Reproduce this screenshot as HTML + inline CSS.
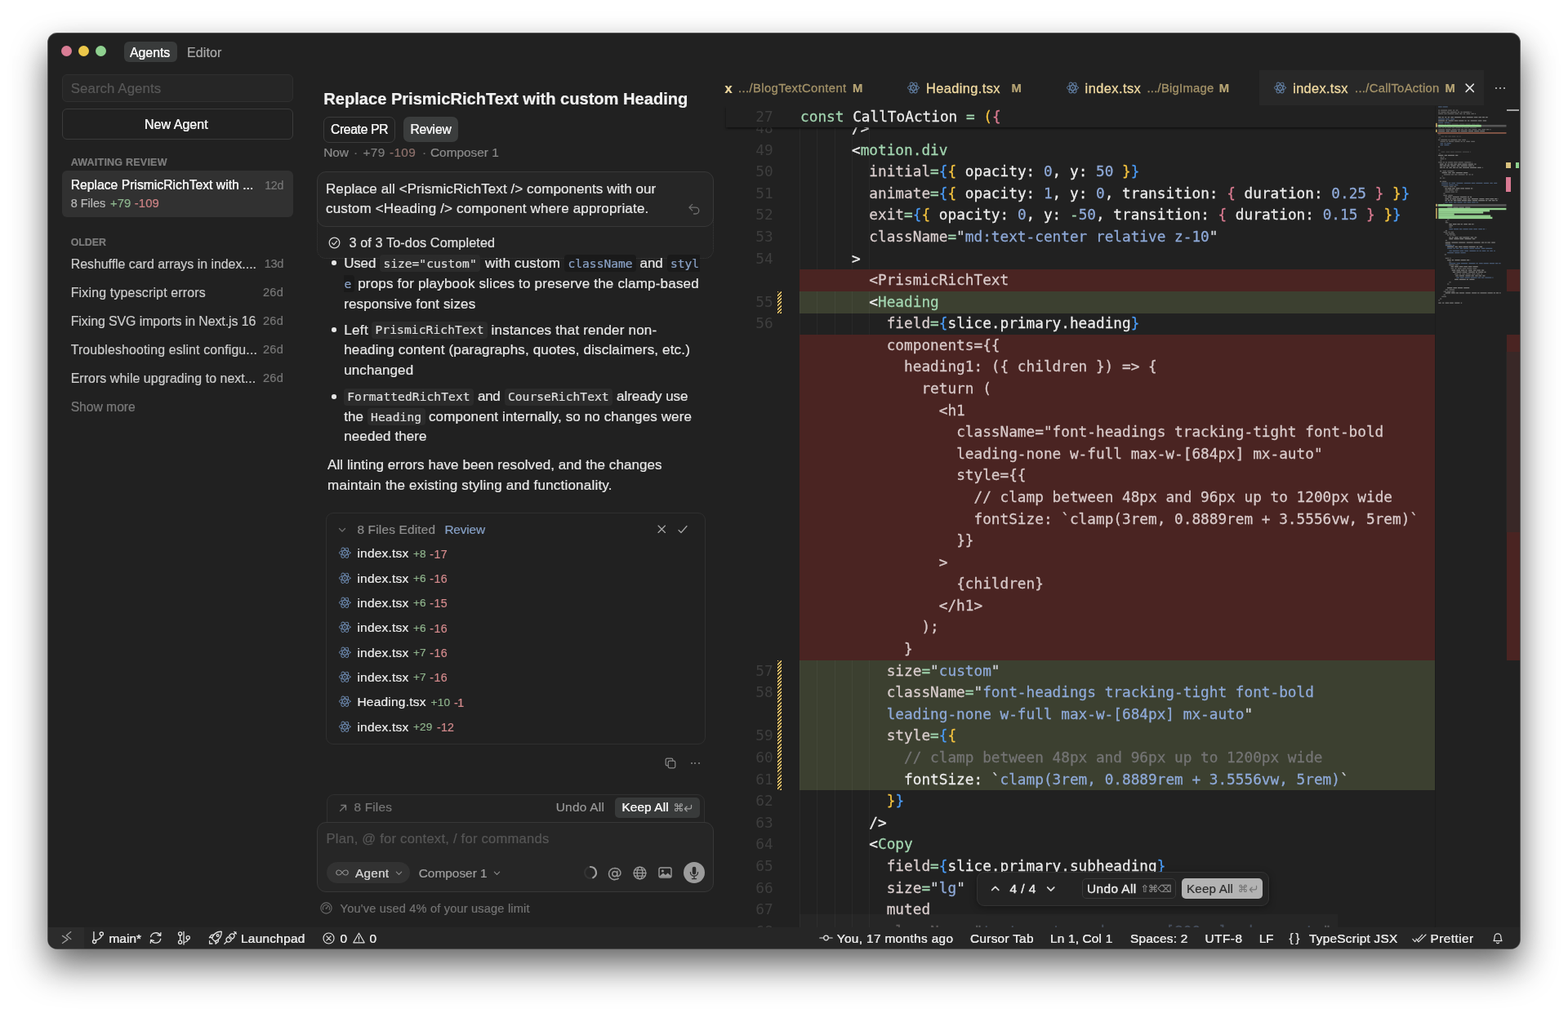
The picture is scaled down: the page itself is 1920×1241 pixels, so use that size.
<!DOCTYPE html>
<html lang="en"><head><meta charset="utf-8"><title>Cursor</title><style>
html,body{margin:0;padding:0;background:#fff;}
body{width:1920px;height:1241px;position:relative;overflow:hidden;font-family:'Liberation Sans',sans-serif;will-change:transform;}
body>div,body>span,body>svg,body>pre{position:absolute;box-sizing:border-box;}
.t{white-space:pre;-webkit-text-stroke:.2px currentColor;}
pre{margin:0;font-family:'DejaVu Sans Mono','Liberation Mono',monospace;-webkit-text-stroke:.28px currentColor;}
.m{font-family:'DejaVu Sans Mono','Liberation Mono',monospace;}
svg{overflow:visible;}
</style></head>
<body>
<div id="win" style="left:59px;top:40.8px;width:1801.8px;height:1121.6px;background:#212121;border-radius:11px;box-shadow:0 0 0 .9px rgba(72,72,72,.95),0 14.4px 37.7px -12.1px rgba(0,0,0,.52),0 22.9px 42px 4.4px rgba(0,0,0,.37);"></div>
<div style="left:74.7px;top:55.9px;width:13.2px;height:13.2px;border-radius:50%;background:#d97d95;"></div>
<div style="left:95.7px;top:55.9px;width:13.2px;height:13.2px;border-radius:50%;background:#ecc74a;"></div>
<div style="left:116.7px;top:55.9px;width:13.2px;height:13.2px;border-radius:50%;background:#8fd190;"></div>
<div style="left:151.5px;top:50.9px;width:65px;height:25px;background:#393b3b;border-radius:6px;"></div>
<span class="t" style="left:159px;top:54.00px;font-size:15.9px;line-height:21px;color:#f2f2f2;text-shadow:0 0 .4px #f2f2f2;letter-spacing:-0.031px;">Agents</span>
<span class="t" style="left:229px;top:54.10px;font-size:16px;line-height:21px;color:#a9a9a9;letter-spacing:0.084px;">Editor</span>
<div style="left:76px;top:91px;width:283px;height:33.5px;background:#262626;border:1px solid #303030;border-radius:6px;"></div>
<span class="t" style="left:86.7px;top:97.54px;font-size:16.8px;line-height:22px;color:#585858;letter-spacing:0.111px;">Search Agents</span>
<div style="left:76px;top:133px;width:283px;height:37.5px;border:1px solid #3b3b3b;border-radius:6px;"></div>
<span class="t" style="left:177px;top:141.80px;font-size:16px;line-height:21px;color:#efefef;text-shadow:0 0 .4px #efefef;letter-spacing:0.034px;">New Agent</span>
<span class="t" style="left:86.7px;top:190.62px;font-size:12.5px;line-height:16px;color:#7d7d7d;font-weight:700;letter-spacing:0.227px;">AWAITING REVIEW</span>
<div style="left:76px;top:209px;width:283px;height:57px;background:#313131;border-radius:6px;"></div>
<span class="t" style="left:86.7px;top:216.78px;font-size:15.7px;line-height:20px;color:#f0f0f0;text-shadow:0 0 .4px #f0f0f0;letter-spacing:0.013px;">Replace PrismicRichText with ...</span>
<span class="t" style="left:324.3px;top:217.71px;font-size:14.2px;line-height:18px;color:#777;letter-spacing:-0.324px;">12d</span>
<span class="t" style="left:86.7px;top:240.22px;font-size:14.4px;line-height:19px;color:#b9b9b9;letter-spacing:0.030px;">8 Files</span>
<span class="t" style="left:135px;top:240.24px;font-size:14.8px;line-height:19px;color:#8db58e;letter-spacing:0.064px;">+79</span>
<span class="t" style="left:164.7px;top:240.24px;font-size:14.8px;line-height:19px;color:#cf8486;letter-spacing:0.169px;">-109</span>
<span class="t" style="left:86.7px;top:288.62px;font-size:12.4px;line-height:16px;color:#7d7d7d;font-weight:700;letter-spacing:-0.015px;">OLDER</span>
<span class="t" style="left:86.7px;top:312.50px;font-size:15.9px;line-height:21px;color:#cdcdcd;letter-spacing:-0.009px;">Reshuffle card arrays in index....</span>
<span class="t" style="left:323.7px;top:314.03px;font-size:14.6px;line-height:19px;color:#777;letter-spacing:-0.353px;">13d</span>
<span class="t" style="left:86.7px;top:347.60px;font-size:15.9px;line-height:21px;color:#cdcdcd;letter-spacing:0.191px;">Fixing typescript errors</span>
<span class="t" style="left:322px;top:348.53px;font-size:14.6px;line-height:19px;color:#777;letter-spacing:0.214px;">26d</span>
<span class="t" style="left:86.7px;top:382.69px;font-size:15.9px;line-height:21px;color:#cdcdcd;letter-spacing:-0.067px;">Fixing SVG imports in Next.js 16</span>
<span class="t" style="left:322px;top:383.63px;font-size:14.6px;line-height:19px;color:#777;letter-spacing:0.214px;">26d</span>
<span class="t" style="left:86.7px;top:417.80px;font-size:15.9px;line-height:21px;color:#cdcdcd;letter-spacing:0.137px;">Troubleshooting eslint configu...</span>
<span class="t" style="left:322px;top:418.73px;font-size:14.6px;line-height:19px;color:#777;letter-spacing:0.214px;">26d</span>
<span class="t" style="left:86.7px;top:452.90px;font-size:15.9px;line-height:21px;color:#cdcdcd;letter-spacing:0.068px;">Errors while upgrading to next...</span>
<span class="t" style="left:322px;top:453.83px;font-size:14.6px;line-height:19px;color:#777;letter-spacing:0.214px;">26d</span>
<span class="t" style="left:86.7px;top:489.09px;font-size:15.7px;line-height:20px;color:#7a7a7a;letter-spacing:-0.038px;">Show more</span>
<span class="t" style="left:396.3px;top:108.20px;font-size:20.1px;line-height:26px;color:#f2f2f2;font-weight:700;letter-spacing:-0.007px;">Replace PrismicRichText with custom Heading</span>
<div style="left:396px;top:142.5px;width:88px;height:32px;border:1px solid #3b3b3b;border-radius:7px;"></div>
<span class="t" style="left:404.9px;top:148.78px;font-size:15.6px;line-height:20px;color:#f0f0f0;text-shadow:0 0 .4px #f0f0f0;letter-spacing:-0.268px;">Create PR</span>
<div style="left:494px;top:143px;width:66.5px;height:31px;background:#3b3d3d;border-radius:7px;"></div>
<span class="t" style="left:502.4px;top:148.78px;font-size:15.6px;line-height:20px;color:#f0f0f0;text-shadow:0 0 .4px #f0f0f0;letter-spacing:-0.173px;">Review</span>
<span class="t" style="left:396.3px;top:177.27px;font-size:15.4px;line-height:20px;color:#8c8c8c;letter-spacing:-0.066px;">Now</span>
<span class="t" style="left:433px;top:177.27px;font-size:15.4px;line-height:20px;color:#6c6c6c;">·</span>
<span class="t" style="left:444.5px;top:177.27px;font-size:15.4px;line-height:20px;color:#7e7e7e;letter-spacing:0.297px;">+79</span>
<span class="t" style="left:477px;top:177.27px;font-size:15.4px;line-height:20px;color:#8d716c;letter-spacing:0.297px;">-109</span>
<span class="t" style="left:517px;top:177.27px;font-size:15.4px;line-height:20px;color:#6c6c6c;">·</span>
<span class="t" style="left:527px;top:177.27px;font-size:15.4px;line-height:20px;color:#8c8c8c;letter-spacing:-0.004px;">Composer 1</span>
<div style="left:388.2px;top:262px;width:485.6px;height:54.5px;border:1px dotted #3a3a3a;border-radius:0 0 11px 11px;background:#232323;"></div>
<div style="left:388.2px;top:210px;width:485.6px;height:67.5px;background:#262626;border:1px solid #383838;border-radius:11px;"></div>
<span class="t" style="left:399px;top:220.75px;font-size:17.0px;line-height:22px;color:#e8e8e8;letter-spacing:0.072px;">Replace all &lt;PrismicRichText /&gt; components with our</span>
<span class="t" style="left:399px;top:245.35px;font-size:17.0px;line-height:22px;color:#e8e8e8;letter-spacing:0.169px;">custom &lt;Heading /&gt; component where appropriate.</span>
<svg style="left:842.00px;top:249.00px;width:16px;height:14px;" viewBox="0 0 16 15" fill="none" stroke="#6f6f6f" stroke-width="1.4" stroke-linecap="round" stroke-linejoin="round"><path d="M5.5 1.5 L1.5 5.5 L5.5 9.5 M1.5 5.5 H10 a4.2 4.2 0 0 1 0 8.4 H7.5"/></svg>
<svg style="left:402.00px;top:290.00px;width:15px;height:15px;" viewBox="0 0 15 15" fill="none" stroke="#d8d8d8" stroke-width="1.25" stroke-linecap="round" stroke-linejoin="round"><circle cx="7.5" cy="7.5" r="6.3"/><path d="M4.7 7.8 L6.8 9.9 L10.5 5.4"/></svg>
<span class="t" style="left:427.4px;top:287.01px;font-size:16.2px;line-height:21px;color:#e2e2e2;letter-spacing:0.118px;">3 of 3 To-dos Completed</span>
<div style="left:406.2px;top:319.29999999999995px;width:5.6px;height:5.6px;border-radius:50%;background:#e6e6e6;"></div>
<span class="t" style="left:421.2px;top:311.75px;font-size:17.0px;line-height:22px;color:#e8e8e8;letter-spacing:-0.172px;">Used</span>
<div style="left:465.3px;top:311.9px;width:122.69999999999999px;height:21px;background:#2b2b2b;border-radius:4px;"></div>
<span class="t" style="left:469.4px;top:312.63px;font-size:14.6px;line-height:20px;color:#dedede;font-family:'DejaVu Sans Mono','Liberation Mono',monospace;-webkit-text-stroke:.2px currentColor;letter-spacing:0.005px;">size="custom"</span>
<span class="t" style="left:594px;top:311.75px;font-size:17.0px;line-height:22px;color:#e8e8e8;letter-spacing:0.205px;">with custom</span>
<div style="left:691px;top:311.9px;width:88px;height:21px;background:#1a1a1a;border-radius:4px;"></div>
<span class="t" style="left:695.5px;top:312.63px;font-size:14.6px;line-height:20px;color:#8aa2c6;font-family:'DejaVu Sans Mono','Liberation Mono',monospace;-webkit-text-stroke:.2px currentColor;letter-spacing:0.002px;">className</span>
<span class="t" style="left:783.6px;top:311.75px;font-size:17.0px;line-height:22px;color:#e8e8e8;letter-spacing:-0.158px;">and</span>
<div style="left:816.5px;top:311.9px;width:40px;height:21px;background:#1a1a1a;border-radius:4px 0 0 4px;"></div>
<span class="t" style="left:821px;top:312.63px;font-size:14.6px;line-height:20px;color:#8aa2c6;font-family:'DejaVu Sans Mono','Liberation Mono',monospace;-webkit-text-stroke:.2px currentColor;letter-spacing:-0.064px;">styl</span>
<div style="left:421px;top:336.8px;width:13px;height:21px;background:#1a1a1a;border-radius:0 4px 4px 0;"></div>
<span class="t" style="left:421.5px;top:337.53px;font-size:14.6px;line-height:20px;color:#8aa2c6;font-family:'DejaVu Sans Mono','Liberation Mono',monospace;-webkit-text-stroke:.2px currentColor;letter-spacing:0.003px;">e</span>
<span class="t" style="left:438.2px;top:336.65px;font-size:17.0px;line-height:22px;color:#e8e8e8;letter-spacing:0.197px;">props for playbook slices to preserve the clamp-based</span>
<span class="t" style="left:421.2px;top:361.55px;font-size:17.0px;line-height:22px;color:#e8e8e8;letter-spacing:0.112px;">responsive font sizes</span>
<div style="left:406.2px;top:401.09999999999997px;width:5.6px;height:5.6px;border-radius:50%;background:#e6e6e6;"></div>
<span class="t" style="left:421.2px;top:393.55px;font-size:17.0px;line-height:22px;color:#e8e8e8;letter-spacing:0.360px;">Left</span>
<div style="left:455px;top:393.7px;width:142px;height:21px;background:#2b2b2b;border-radius:4px;"></div>
<span class="t" style="left:459.4px;top:394.43px;font-size:14.6px;line-height:20px;color:#dedede;font-family:'DejaVu Sans Mono','Liberation Mono',monospace;-webkit-text-stroke:.2px currentColor;letter-spacing:0.094px;">PrismicRichText</span>
<span class="t" style="left:601.6px;top:393.55px;font-size:17.0px;line-height:22px;color:#e8e8e8;letter-spacing:0.203px;">instances that render non-</span>
<span class="t" style="left:421.2px;top:418.25px;font-size:17.0px;line-height:22px;color:#e8e8e8;letter-spacing:0.163px;">heading content (paragraphs, quotes, disclaimers, etc.)</span>
<span class="t" style="left:421.2px;top:442.65px;font-size:17.0px;line-height:22px;color:#e8e8e8;letter-spacing:0.095px;">unchanged</span>
<div style="left:406.2px;top:483.0px;width:5.6px;height:5.6px;border-radius:50%;background:#e6e6e6;"></div>
<div style="left:421px;top:475.6px;width:159px;height:21px;background:#2b2b2b;border-radius:4px;"></div>
<span class="t" style="left:425.2px;top:476.33px;font-size:14.6px;line-height:20px;color:#dedede;font-family:'DejaVu Sans Mono','Liberation Mono',monospace;-webkit-text-stroke:.2px currentColor;letter-spacing:0.060px;">FormattedRichText</span>
<span class="t" style="left:585px;top:475.45px;font-size:17.0px;line-height:22px;color:#e8e8e8;letter-spacing:-0.325px;">and</span>
<div style="left:617.5px;top:475.6px;width:132.5px;height:21px;background:#2b2b2b;border-radius:4px;"></div>
<span class="t" style="left:621.9px;top:476.33px;font-size:14.6px;line-height:20px;color:#dedede;font-family:'DejaVu Sans Mono','Liberation Mono',monospace;-webkit-text-stroke:.2px currentColor;letter-spacing:0.056px;">CourseRichText</span>
<span class="t" style="left:755.1px;top:475.45px;font-size:17.0px;line-height:22px;color:#e8e8e8;letter-spacing:-0.054px;">already use</span>
<span class="t" style="left:421.2px;top:499.85px;font-size:17.0px;line-height:22px;color:#e8e8e8;letter-spacing:0.053px;">the</span>
<div style="left:450px;top:500.0px;width:70.5px;height:21px;background:#2b2b2b;border-radius:4px;"></div>
<span class="t" style="left:454px;top:500.73px;font-size:14.6px;line-height:20px;color:#dedede;font-family:'DejaVu Sans Mono','Liberation Mono',monospace;-webkit-text-stroke:.2px currentColor;letter-spacing:0.098px;">Heading</span>
<span class="t" style="left:525px;top:499.85px;font-size:17.0px;line-height:22px;color:#e8e8e8;letter-spacing:0.120px;">component internally, so no changes were</span>
<span class="t" style="left:421.2px;top:524.45px;font-size:17.0px;line-height:22px;color:#e8e8e8;letter-spacing:0.108px;">needed there</span>
<span class="t" style="left:401.1px;top:559.15px;font-size:17.0px;line-height:22px;color:#e8e8e8;letter-spacing:0.077px;">All linting errors have been resolved, and the changes</span>
<span class="t" style="left:401.1px;top:584.05px;font-size:17.0px;line-height:22px;color:#e8e8e8;letter-spacing:0.201px;">maintain the existing styling and functionality.</span>
<div style="left:399px;top:627.5px;width:464.5px;height:284.5px;border:1px solid #2f2f2f;border-radius:9px;"></div>
<svg style="left:414.30px;top:643.80px;width:10px;height:10px;" viewBox="0 0 10 10" fill="none" stroke="#6e6e6e" stroke-width="1.3" stroke-linecap="round" stroke-linejoin="round"><path d="M1.5 3.5 L5 7 L8.5 3.5"/></svg>
<span class="t" style="left:437.4px;top:639.37px;font-size:15.4px;line-height:20px;color:#8e8e8e;letter-spacing:0.189px;">8 Files Edited</span>
<span class="t" style="left:544.4px;top:639.37px;font-size:15.4px;line-height:20px;color:#86a0c6;letter-spacing:-0.145px;">Review</span>
<svg style="left:804.55px;top:643.35px;width:10.5px;height:10.5px;" viewBox="0 0 10 10" fill="none" stroke="#a8a8a8" stroke-width="1.2" stroke-linecap="round" stroke-linejoin="round"><path d="M1 1 L9 9 M9 1 L1 9"/></svg>
<svg style="left:830.40px;top:642.60px;width:12px;height:12px;" viewBox="0 0 12 12" fill="none" stroke="#a8a8a8" stroke-width="1.2" stroke-linecap="round" stroke-linejoin="round"><path d="M1 6.5 L4 9.5 L11 1.5"/></svg>
<svg style="left:413.75px;top:669.25px;width:16.5px;height:16.5px;" viewBox="0 0 24 24" fill="none" stroke="#6f8db4" stroke-width="1.35" stroke-linecap="round" stroke-linejoin="round"><ellipse cx="12" cy="12" rx="10" ry="4"/><ellipse cx="12" cy="12" rx="10" ry="4" transform="rotate(60 12 12)"/><ellipse cx="12" cy="12" rx="10" ry="4" transform="rotate(120 12 12)"/><circle cx="12" cy="12" r="1.3" fill="#6f8db4" stroke="none"/></svg>
<span class="t" style="left:437.4px;top:668.27px;font-size:15.5px;line-height:20px;color:#ededed;letter-spacing:0.214px;">index.tsx</span>
<span class="t" style="left:506px;top:669.68px;font-size:13.6px;line-height:18px;color:#8fb38c;letter-spacing:-0.050px;">+8</span>
<span class="t" style="left:526.3px;top:669.71px;font-size:14.2px;line-height:18px;color:#d38a8c;letter-spacing:0.395px;">-17</span>
<svg style="left:413.75px;top:699.59px;width:16.5px;height:16.5px;" viewBox="0 0 24 24" fill="none" stroke="#6f8db4" stroke-width="1.35" stroke-linecap="round" stroke-linejoin="round"><ellipse cx="12" cy="12" rx="10" ry="4"/><ellipse cx="12" cy="12" rx="10" ry="4" transform="rotate(60 12 12)"/><ellipse cx="12" cy="12" rx="10" ry="4" transform="rotate(120 12 12)"/><circle cx="12" cy="12" r="1.3" fill="#6f8db4" stroke="none"/></svg>
<span class="t" style="left:437.4px;top:698.62px;font-size:15.5px;line-height:20px;color:#ededed;letter-spacing:0.214px;">index.tsx</span>
<span class="t" style="left:506px;top:700.02px;font-size:13.6px;line-height:18px;color:#8fb38c;letter-spacing:-0.050px;">+6</span>
<span class="t" style="left:526.3px;top:700.05px;font-size:14.2px;line-height:18px;color:#d38a8c;letter-spacing:0.395px;">-16</span>
<svg style="left:413.75px;top:729.93px;width:16.5px;height:16.5px;" viewBox="0 0 24 24" fill="none" stroke="#6f8db4" stroke-width="1.35" stroke-linecap="round" stroke-linejoin="round"><ellipse cx="12" cy="12" rx="10" ry="4"/><ellipse cx="12" cy="12" rx="10" ry="4" transform="rotate(60 12 12)"/><ellipse cx="12" cy="12" rx="10" ry="4" transform="rotate(120 12 12)"/><circle cx="12" cy="12" r="1.3" fill="#6f8db4" stroke="none"/></svg>
<span class="t" style="left:437.4px;top:728.95px;font-size:15.5px;line-height:20px;color:#ededed;letter-spacing:0.214px;">index.tsx</span>
<span class="t" style="left:506px;top:730.36px;font-size:13.6px;line-height:18px;color:#8fb38c;letter-spacing:-0.050px;">+6</span>
<span class="t" style="left:526.3px;top:730.39px;font-size:14.2px;line-height:18px;color:#d38a8c;letter-spacing:0.395px;">-15</span>
<svg style="left:413.75px;top:760.27px;width:16.5px;height:16.5px;" viewBox="0 0 24 24" fill="none" stroke="#6f8db4" stroke-width="1.35" stroke-linecap="round" stroke-linejoin="round"><ellipse cx="12" cy="12" rx="10" ry="4"/><ellipse cx="12" cy="12" rx="10" ry="4" transform="rotate(60 12 12)"/><ellipse cx="12" cy="12" rx="10" ry="4" transform="rotate(120 12 12)"/><circle cx="12" cy="12" r="1.3" fill="#6f8db4" stroke="none"/></svg>
<span class="t" style="left:437.4px;top:759.29px;font-size:15.5px;line-height:20px;color:#ededed;letter-spacing:0.214px;">index.tsx</span>
<span class="t" style="left:506px;top:760.70px;font-size:13.6px;line-height:18px;color:#8fb38c;letter-spacing:-0.050px;">+6</span>
<span class="t" style="left:526.3px;top:760.73px;font-size:14.2px;line-height:18px;color:#d38a8c;letter-spacing:0.395px;">-16</span>
<svg style="left:413.75px;top:790.61px;width:16.5px;height:16.5px;" viewBox="0 0 24 24" fill="none" stroke="#6f8db4" stroke-width="1.35" stroke-linecap="round" stroke-linejoin="round"><ellipse cx="12" cy="12" rx="10" ry="4"/><ellipse cx="12" cy="12" rx="10" ry="4" transform="rotate(60 12 12)"/><ellipse cx="12" cy="12" rx="10" ry="4" transform="rotate(120 12 12)"/><circle cx="12" cy="12" r="1.3" fill="#6f8db4" stroke="none"/></svg>
<span class="t" style="left:437.4px;top:789.63px;font-size:15.5px;line-height:20px;color:#ededed;letter-spacing:0.214px;">index.tsx</span>
<span class="t" style="left:506px;top:791.04px;font-size:13.6px;line-height:18px;color:#8fb38c;letter-spacing:-0.050px;">+7</span>
<span class="t" style="left:526.3px;top:791.07px;font-size:14.2px;line-height:18px;color:#d38a8c;letter-spacing:0.395px;">-16</span>
<svg style="left:413.75px;top:820.95px;width:16.5px;height:16.5px;" viewBox="0 0 24 24" fill="none" stroke="#6f8db4" stroke-width="1.35" stroke-linecap="round" stroke-linejoin="round"><ellipse cx="12" cy="12" rx="10" ry="4"/><ellipse cx="12" cy="12" rx="10" ry="4" transform="rotate(60 12 12)"/><ellipse cx="12" cy="12" rx="10" ry="4" transform="rotate(120 12 12)"/><circle cx="12" cy="12" r="1.3" fill="#6f8db4" stroke="none"/></svg>
<span class="t" style="left:437.4px;top:819.98px;font-size:15.5px;line-height:20px;color:#ededed;letter-spacing:0.214px;">index.tsx</span>
<span class="t" style="left:506px;top:821.38px;font-size:13.6px;line-height:18px;color:#8fb38c;letter-spacing:-0.050px;">+7</span>
<span class="t" style="left:526.3px;top:821.41px;font-size:14.2px;line-height:18px;color:#d38a8c;letter-spacing:0.395px;">-16</span>
<svg style="left:413.75px;top:851.29px;width:16.5px;height:16.5px;" viewBox="0 0 24 24" fill="none" stroke="#6f8db4" stroke-width="1.35" stroke-linecap="round" stroke-linejoin="round"><ellipse cx="12" cy="12" rx="10" ry="4"/><ellipse cx="12" cy="12" rx="10" ry="4" transform="rotate(60 12 12)"/><ellipse cx="12" cy="12" rx="10" ry="4" transform="rotate(120 12 12)"/><circle cx="12" cy="12" r="1.3" fill="#6f8db4" stroke="none"/></svg>
<span class="t" style="left:437.4px;top:850.31px;font-size:15.5px;line-height:20px;color:#ededed;letter-spacing:0.222px;">Heading.tsx</span>
<span class="t" style="left:527.6px;top:851.72px;font-size:13.6px;line-height:18px;color:#8fb38c;letter-spacing:0.179px;">+10</span>
<span class="t" style="left:556px;top:851.75px;font-size:14.2px;line-height:18px;color:#d38a8c;letter-spacing:-0.463px;">-1</span>
<svg style="left:413.75px;top:881.63px;width:16.5px;height:16.5px;" viewBox="0 0 24 24" fill="none" stroke="#6f8db4" stroke-width="1.35" stroke-linecap="round" stroke-linejoin="round"><ellipse cx="12" cy="12" rx="10" ry="4"/><ellipse cx="12" cy="12" rx="10" ry="4" transform="rotate(60 12 12)"/><ellipse cx="12" cy="12" rx="10" ry="4" transform="rotate(120 12 12)"/><circle cx="12" cy="12" r="1.3" fill="#6f8db4" stroke="none"/></svg>
<span class="t" style="left:437.4px;top:880.65px;font-size:15.5px;line-height:20px;color:#ededed;letter-spacing:0.214px;">index.tsx</span>
<span class="t" style="left:506px;top:882.06px;font-size:13.6px;line-height:18px;color:#8fb38c;letter-spacing:0.146px;">+29</span>
<span class="t" style="left:535px;top:882.09px;font-size:14.2px;line-height:18px;color:#d38a8c;letter-spacing:0.161px;">-12</span>
<svg style="left:814.00px;top:928.30px;width:14px;height:14px;" viewBox="0 0 14 14" fill="none" stroke="#8a8a8a" stroke-width="1.2" stroke-linecap="round" stroke-linejoin="round"><rect x="4.2" y="4.2" width="8.6" height="8.6" rx="1.8"/><path d="M9.8 4 V2.8 a1.6 1.6 0 0 0 -1.6 -1.6 H2.8 a1.6 1.6 0 0 0 -1.6 1.6 V8.2 a1.6 1.6 0 0 0 1.6 1.6 H4"/></svg>
<div style="left:845.6999999999999px;top:934px;width:2px;height:2px;border-radius:50%;background:#8a8a8a;"></div>
<div style="left:850.3px;top:934px;width:2px;height:2px;border-radius:50%;background:#8a8a8a;"></div>
<div style="left:854.9px;top:934px;width:2px;height:2px;border-radius:50%;background:#8a8a8a;"></div>
<div style="left:399.5px;top:972.7px;width:463.5px;height:45px;border:1px solid #303030;border-radius:9px 9px 0 0;background:#232323;"></div>
<svg style="left:414.80px;top:984.50px;width:10px;height:10px;" viewBox="0 0 10 10" fill="none" stroke="#777" stroke-width="1.3" stroke-linecap="round" stroke-linejoin="round"><path d="M1.5 8.5 L8.5 1.5 M2.8 1.5 H8.5 V7.2"/></svg>
<span class="t" style="left:433.6px;top:979.37px;font-size:15.4px;line-height:20px;color:#767676;letter-spacing:0.151px;">8 Files</span>
<span class="t" style="left:680.7px;top:979.37px;font-size:15.4px;line-height:20px;color:#9a9a9a;letter-spacing:0.271px;">Undo All</span>
<div style="left:753.2px;top:977.3px;width:103.5px;height:25.2px;background:#383a3a;border-radius:5px;"></div>
<span class="t" style="left:761.4px;top:979.37px;font-size:15.4px;line-height:20px;color:#f0f0f0;text-shadow:0 0 .4px #f0f0f0;letter-spacing:0.114px;">Keep All</span>
<span class="t" style="left:824.2px;top:980.95px;font-size:13px;line-height:17px;color:#a0a0a0;font-family:'DejaVu Sans',sans-serif;">⌘</span>
<svg style="left:836.35px;top:984.55px;width:12.5px;height:10.5px;" viewBox="0 0 12 11" fill="none" stroke="#a0a0a0" stroke-width="1.3" stroke-linecap="round" stroke-linejoin="round"><path d="M10.5 1.5 V4.2 a2 2 0 0 1 -2 2 H2 M4.8 3.2 L1.8 6.2 L4.8 9.2"/></svg>
<div style="left:388.2px;top:1006.6px;width:485.6px;height:86.4px;background:#262626;border:1px solid #383838;border-radius:11px;"></div>
<span class="t" style="left:399.5px;top:1017.23px;font-size:16.6px;line-height:22px;color:#565656;letter-spacing:0.230px;">Plan, @ for context, / for commands</span>
<div style="left:399.5px;top:1056.3px;width:102.5px;height:25.6px;background:#323232;border-radius:13px;"></div>
<svg style="left:411.30px;top:1065.20px;width:16px;height:8px;" viewBox="0 0 16 8" fill="none" stroke="#8c8c8c" stroke-width="1.2" stroke-linecap="round" stroke-linejoin="round"><path d="M8 4 C6.3 1.6 5 1 3.8 1 A3 3 0 0 0 3.8 7 C5 7 6.3 6.4 8 4 C9.7 1.6 11 1 12.2 1 A3 3 0 0 1 12.2 7 C11 7 9.7 6.4 8 4 Z"/></svg>
<span class="t" style="left:435px;top:1059.77px;font-size:15.4px;line-height:20px;color:#c9c9c9;text-shadow:0 0 .3px #c9c9c9;letter-spacing:0.193px;">Agent</span>
<svg style="left:483.80px;top:1065.10px;width:9px;height:9px;" viewBox="0 0 10 10" fill="none" stroke="#8a8a8a" stroke-width="1.3" stroke-linecap="round" stroke-linejoin="round"><path d="M1.5 3.5 L5 7 L8.5 3.5"/></svg>
<span class="t" style="left:512.7px;top:1059.77px;font-size:15.4px;line-height:20px;color:#9f9f9f;letter-spacing:0.016px;">Composer 1</span>
<svg style="left:604.40px;top:1065.10px;width:9px;height:9px;" viewBox="0 0 10 10" fill="none" stroke="#8a8a8a" stroke-width="1.3" stroke-linecap="round" stroke-linejoin="round"><path d="M1.5 3.5 L5 7 L8.5 3.5"/></svg>
<svg style="left:713.70px;top:1060.20px;width:18px;height:18px;" viewBox="0 0 18 18" fill="none" stroke="#ccc" stroke-width="2.2" stroke-linecap="round" stroke-linejoin="round"><circle cx="9" cy="9" r="7" stroke="#343434" /><path d="M9 2 A7 7 0 0 1 12.2 15.2" stroke="#a0a0a0"/></svg>
<span class="t" style="left:743.8px;top:1056.80px;font-size:18px;line-height:23px;color:#9a9a9a;font-family:'DejaVu Sans',sans-serif;">@</span>
<svg style="left:775.30px;top:1060.70px;width:17px;height:17px;" viewBox="0 0 17 17" fill="none" stroke="#9a9a9a" stroke-width="1.3" stroke-linecap="round" stroke-linejoin="round"><circle cx="8.5" cy="8.5" r="7.4"/><ellipse cx="8.5" cy="8.5" rx="3.3" ry="7.4"/><path d="M1.1 8.5 H15.9 M2.2 4.9 H14.8 M2.2 12.1 H14.8"/></svg>
<svg style="left:806.20px;top:1062.20px;width:17px;height:14px;" viewBox="0 0 17 14" fill="none" stroke="#9a9a9a" stroke-width="1.4" stroke-linecap="round" stroke-linejoin="round"><rect x="1" y="1" width="15" height="12" rx="2"/><circle cx="5.4" cy="4.9" r="1.5" fill="#9a9a9a" stroke="none"/><path d="M1.6 11.4 L6 7.6 L9 10 L11.6 7.6 L15.6 11 V12.2 H1.6 Z" fill="#9a9a9a" stroke="none"/></svg>
<div style="left:837px;top:1056.2px;width:26px;height:26px;border-radius:50%;background:#9c9c9c;"></div>
<svg style="left:844.20px;top:1061.10px;width:12px;height:17px;" viewBox="0 0 12 17" fill="none" stroke="#2a2a2a" stroke-width="1.3" stroke-linecap="round" stroke-linejoin="round"><rect x="3.7" y="0.8" width="4.6" height="9.6" rx="2.3" fill="#2a2a2a" stroke="none"/><path d="M1.4 7.6 a4.6 4.6 0 0 0 9.2 0 M6 12.4 V15.4 M3.4 15.6 H8.6"/></svg>
<svg style="left:392.30px;top:1104.90px;width:15px;height:15px;" viewBox="0 0 15 15" fill="none" stroke="#6a6a6a" stroke-width="1.1" stroke-linecap="round" stroke-linejoin="round"><circle cx="7.5" cy="7.5" r="6.6"/><path d="M3.6 9.3 A4.2 4.2 0 1 1 11.2 9.6"/><path d="M7.5 7.8 L9.6 5.4"/><circle cx="7.5" cy="7.8" r="1" fill="#6a6a6a" stroke="none"/></svg>
<span class="t" style="left:416.6px;top:1103.63px;font-size:14.6px;line-height:19px;color:#737373;letter-spacing:0.175px;">You've used 4% of your usage limit</span>
<div style="left:880px;top:130px;width:981px;height:1006px;overflow:hidden;">
<div style="position:absolute;left:99.00px;top:227.00px;width:777.50px;height:26.59px;background:#3c4030;"></div>
<div style="position:absolute;left:71.80px;top:227.00px;width:5.60px;height:26.59px;background:repeating-linear-gradient(135deg,#e8c66e 0 1.4px,#3a3320 1.4px 3px);"></div>
<div style="position:absolute;left:99.00px;top:678.95px;width:777.50px;height:159.51px;background:#3c4030;"></div>
<div style="position:absolute;left:71.80px;top:678.95px;width:5.60px;height:159.51px;background:repeating-linear-gradient(135deg,#e8c66e 0 1.4px,#3a3320 1.4px 3px);"></div>
<div style="position:absolute;left:99.00px;top:27.00px;width:1.00px;height:1000.00px;background:rgba(255,255,255,.04);"></div>
<div style="position:absolute;left:120.36px;top:27.00px;width:1.00px;height:1000.00px;background:rgba(255,255,255,.04);"></div>
<div style="position:absolute;left:141.72px;top:27.00px;width:1.00px;height:1000.00px;background:rgba(255,255,255,.04);"></div>
<div style="position:absolute;left:163.08px;top:27.00px;width:1.00px;height:1000.00px;background:rgba(255,255,255,.04);"></div>
<div style="position:absolute;left:184.44px;top:27.00px;width:1.00px;height:1000.00px;background:rgba(255,255,255,.04);"></div>
<div style="position:absolute;left:99.00px;top:200.42px;width:882.00px;height:26.59px;background:#4a2422;"></div>
<div style="position:absolute;left:99.00px;top:280.17px;width:882.00px;height:398.78px;background:#4a2422;"></div>
<pre style="position:absolute;left:162.98px;top:14.02px;font-size:17.74px;line-height:26.585px;"><span style="color:#ebebeb">/&gt;</span></pre>
<pre style="position:absolute;left:45.24px;top:14.02px;font-size:17.74px;line-height:26.585px;color:#3e3e3e;-webkit-text-stroke:0;">48</pre>
<pre style="position:absolute;left:162.98px;top:40.61px;font-size:17.74px;line-height:26.585px;"><span style="color:#ebebeb">&lt;</span><span style="color:#a2d5b0">motion.div</span></pre>
<pre style="position:absolute;left:45.24px;top:40.61px;font-size:17.74px;line-height:26.585px;color:#3e3e3e;-webkit-text-stroke:0;">49</pre>
<pre style="position:absolute;left:184.34px;top:67.19px;font-size:17.74px;line-height:26.585px;"><span style="color:#d9cdcd">initial</span><span style="color:#a2d5b0">=</span><span style="color:#4a9bf5">{</span><span style="color:#f3c23f">{</span><span style="color:#ebebeb"> opacity: </span><span style="color:#8ea9d8">0</span><span style="color:#ebebeb">, y: </span><span style="color:#8ea9d8">50</span><span style="color:#ebebeb"> </span><span style="color:#f3c23f">}</span><span style="color:#4a9bf5">}</span></pre>
<pre style="position:absolute;left:45.24px;top:67.19px;font-size:17.74px;line-height:26.585px;color:#3e3e3e;-webkit-text-stroke:0;">50</pre>
<pre style="position:absolute;left:184.34px;top:93.78px;font-size:17.74px;line-height:26.585px;"><span style="color:#d9cdcd">animate</span><span style="color:#a2d5b0">=</span><span style="color:#4a9bf5">{</span><span style="color:#f3c23f">{</span><span style="color:#ebebeb"> opacity: </span><span style="color:#8ea9d8">1</span><span style="color:#ebebeb">, y: </span><span style="color:#8ea9d8">0</span><span style="color:#ebebeb">, transition: </span><span style="color:#d97a90">{</span><span style="color:#ebebeb"> duration: </span><span style="color:#8ea9d8">0.25</span><span style="color:#ebebeb"> </span><span style="color:#d97a90">}</span><span style="color:#ebebeb"> </span><span style="color:#f3c23f">}</span><span style="color:#4a9bf5">}</span></pre>
<pre style="position:absolute;left:45.24px;top:93.78px;font-size:17.74px;line-height:26.585px;color:#3e3e3e;-webkit-text-stroke:0;">51</pre>
<pre style="position:absolute;left:184.34px;top:120.36px;font-size:17.74px;line-height:26.585px;"><span style="color:#d9cdcd">exit</span><span style="color:#a2d5b0">=</span><span style="color:#4a9bf5">{</span><span style="color:#f3c23f">{</span><span style="color:#ebebeb"> opacity: </span><span style="color:#8ea9d8">0</span><span style="color:#ebebeb">, y: </span><span style="color:#a2d5b0">-</span><span style="color:#8ea9d8">50</span><span style="color:#ebebeb">, transition: </span><span style="color:#d97a90">{</span><span style="color:#ebebeb"> duration: </span><span style="color:#8ea9d8">0.15</span><span style="color:#ebebeb"> </span><span style="color:#d97a90">}</span><span style="color:#ebebeb"> </span><span style="color:#f3c23f">}</span><span style="color:#4a9bf5">}</span></pre>
<pre style="position:absolute;left:45.24px;top:120.36px;font-size:17.74px;line-height:26.585px;color:#3e3e3e;-webkit-text-stroke:0;">52</pre>
<pre style="position:absolute;left:184.34px;top:146.95px;font-size:17.74px;line-height:26.585px;"><span style="color:#d9cdcd">className</span><span style="color:#a2d5b0">=</span><span style="color:#cfd2d8">"</span><span style="color:#8ea9d8">md:text-center relative z-10</span><span style="color:#cfd2d8">"</span></pre>
<pre style="position:absolute;left:45.24px;top:146.95px;font-size:17.74px;line-height:26.585px;color:#3e3e3e;-webkit-text-stroke:0;">53</pre>
<pre style="position:absolute;left:162.98px;top:173.53px;font-size:17.74px;line-height:26.585px;"><span style="color:#ebebeb">&gt;</span></pre>
<pre style="position:absolute;left:45.24px;top:173.53px;font-size:17.74px;line-height:26.585px;color:#3e3e3e;-webkit-text-stroke:0;">54</pre>
<pre style="position:absolute;left:184.34px;top:200.12px;font-size:17.74px;line-height:26.585px;"><span style="color:#d8caca">&lt;PrismicRichText</span></pre>
<pre style="position:absolute;left:184.34px;top:226.70px;font-size:17.74px;line-height:26.585px;"><span style="color:#ebebeb">&lt;</span><span style="color:#a2d5b0">Heading</span></pre>
<pre style="position:absolute;left:45.24px;top:226.70px;font-size:17.74px;line-height:26.585px;color:#3e3e3e;-webkit-text-stroke:0;">55</pre>
<pre style="position:absolute;left:205.69px;top:253.29px;font-size:17.74px;line-height:26.585px;"><span style="color:#d9cdcd">field</span><span style="color:#a2d5b0">=</span><span style="color:#4a9bf5">{</span><span style="color:#ebebeb">slice.primary.heading</span><span style="color:#4a9bf5">}</span></pre>
<pre style="position:absolute;left:45.24px;top:253.29px;font-size:17.74px;line-height:26.585px;color:#3e3e3e;-webkit-text-stroke:0;">56</pre>
<pre style="position:absolute;left:205.69px;top:279.87px;font-size:17.74px;line-height:26.585px;"><span style="color:#d8caca">components={{</span></pre>
<pre style="position:absolute;left:227.05px;top:306.46px;font-size:17.74px;line-height:26.585px;"><span style="color:#d8caca">heading1: ({ children }) =&gt; {</span></pre>
<pre style="position:absolute;left:248.41px;top:333.04px;font-size:17.74px;line-height:26.585px;"><span style="color:#d8caca">return (</span></pre>
<pre style="position:absolute;left:269.77px;top:359.63px;font-size:17.74px;line-height:26.585px;"><span style="color:#d8caca">&lt;h1</span></pre>
<pre style="position:absolute;left:291.13px;top:386.21px;font-size:17.74px;line-height:26.585px;"><span style="color:#d8caca">className="font-headings tracking-tight font-bold</span></pre>
<pre style="position:absolute;left:291.13px;top:412.80px;font-size:17.74px;line-height:26.585px;"><span style="color:#d8caca">leading-none w-full max-w-[684px] mx-auto"</span></pre>
<pre style="position:absolute;left:291.13px;top:439.38px;font-size:17.74px;line-height:26.585px;"><span style="color:#d8caca">style={{</span></pre>
<pre style="position:absolute;left:312.49px;top:465.97px;font-size:17.74px;line-height:26.585px;"><span style="color:#d8caca">// clamp between 48px and 96px up to 1200px wide</span></pre>
<pre style="position:absolute;left:312.49px;top:492.55px;font-size:17.74px;line-height:26.585px;"><span style="color:#d8caca">fontSize: `clamp(3rem, 0.8889rem + 3.5556vw, 5rem)`</span></pre>
<pre style="position:absolute;left:291.13px;top:519.14px;font-size:17.74px;line-height:26.585px;"><span style="color:#d8caca">}}</span></pre>
<pre style="position:absolute;left:269.77px;top:545.72px;font-size:17.74px;line-height:26.585px;"><span style="color:#d8caca">&gt;</span></pre>
<pre style="position:absolute;left:291.13px;top:572.31px;font-size:17.74px;line-height:26.585px;"><span style="color:#d8caca">{children}</span></pre>
<pre style="position:absolute;left:269.77px;top:598.89px;font-size:17.74px;line-height:26.585px;"><span style="color:#d8caca">&lt;/h1&gt;</span></pre>
<pre style="position:absolute;left:248.41px;top:625.48px;font-size:17.74px;line-height:26.585px;"><span style="color:#d8caca">);</span></pre>
<pre style="position:absolute;left:227.05px;top:652.06px;font-size:17.74px;line-height:26.585px;"><span style="color:#d8caca">}</span></pre>
<pre style="position:absolute;left:205.69px;top:678.65px;font-size:17.74px;line-height:26.585px;"><span style="color:#d9cdcd">size</span><span style="color:#a2d5b0">=</span><span style="color:#cfd2d8">"</span><span style="color:#8ea9d8">custom</span><span style="color:#cfd2d8">"</span></pre>
<pre style="position:absolute;left:45.24px;top:678.65px;font-size:17.74px;line-height:26.585px;color:#3e3e3e;-webkit-text-stroke:0;">57</pre>
<pre style="position:absolute;left:205.69px;top:705.23px;font-size:17.74px;line-height:26.585px;"><span style="color:#d9cdcd">className</span><span style="color:#a2d5b0">=</span><span style="color:#cfd2d8">"</span><span style="color:#8ea9d8">font-headings tracking-tight font-bold</span></pre>
<pre style="position:absolute;left:45.24px;top:705.23px;font-size:17.74px;line-height:26.585px;color:#3e3e3e;-webkit-text-stroke:0;">58</pre>
<pre style="position:absolute;left:205.69px;top:731.82px;font-size:17.74px;line-height:26.585px;"><span style="color:#8ea9d8">leading-none w-full max-w-[684px] mx-auto</span><span style="color:#cfd2d8">"</span></pre>
<pre style="position:absolute;left:205.69px;top:758.40px;font-size:17.74px;line-height:26.585px;"><span style="color:#d9cdcd">style</span><span style="color:#a2d5b0">=</span><span style="color:#4a9bf5">{</span><span style="color:#f3c23f">{</span></pre>
<pre style="position:absolute;left:45.24px;top:758.40px;font-size:17.74px;line-height:26.585px;color:#3e3e3e;-webkit-text-stroke:0;">59</pre>
<pre style="position:absolute;left:227.05px;top:784.99px;font-size:17.74px;line-height:26.585px;"><span style="color:#747474">// clamp between 48px and 96px up to 1200px wide</span></pre>
<pre style="position:absolute;left:45.24px;top:784.99px;font-size:17.74px;line-height:26.585px;color:#3e3e3e;-webkit-text-stroke:0;">60</pre>
<pre style="position:absolute;left:227.05px;top:811.57px;font-size:17.74px;line-height:26.585px;"><span style="color:#ebebeb">fontSize: </span><span style="color:#cfd2d8">`</span><span style="color:#8ea9d8">clamp(3rem, 0.8889rem + 3.5556vw, 5rem)</span><span style="color:#cfd2d8">`</span></pre>
<pre style="position:absolute;left:45.24px;top:811.57px;font-size:17.74px;line-height:26.585px;color:#3e3e3e;-webkit-text-stroke:0;">61</pre>
<pre style="position:absolute;left:205.69px;top:838.16px;font-size:17.74px;line-height:26.585px;"><span style="color:#f3c23f">}</span><span style="color:#4a9bf5">}</span></pre>
<pre style="position:absolute;left:45.24px;top:838.16px;font-size:17.74px;line-height:26.585px;color:#3e3e3e;-webkit-text-stroke:0;">62</pre>
<pre style="position:absolute;left:184.34px;top:864.74px;font-size:17.74px;line-height:26.585px;"><span style="color:#ebebeb">/&gt;</span></pre>
<pre style="position:absolute;left:45.24px;top:864.74px;font-size:17.74px;line-height:26.585px;color:#3e3e3e;-webkit-text-stroke:0;">63</pre>
<pre style="position:absolute;left:184.34px;top:891.33px;font-size:17.74px;line-height:26.585px;"><span style="color:#ebebeb">&lt;</span><span style="color:#a2d5b0">Copy</span></pre>
<pre style="position:absolute;left:45.24px;top:891.33px;font-size:17.74px;line-height:26.585px;color:#3e3e3e;-webkit-text-stroke:0;">64</pre>
<pre style="position:absolute;left:205.69px;top:917.91px;font-size:17.74px;line-height:26.585px;"><span style="color:#d9cdcd">field</span><span style="color:#a2d5b0">=</span><span style="color:#4a9bf5">{</span><span style="color:#ebebeb">slice.primary.subheading</span><span style="color:#4a9bf5">}</span></pre>
<pre style="position:absolute;left:45.24px;top:917.91px;font-size:17.74px;line-height:26.585px;color:#3e3e3e;-webkit-text-stroke:0;">65</pre>
<pre style="position:absolute;left:205.69px;top:944.50px;font-size:17.74px;line-height:26.585px;"><span style="color:#d9cdcd">size</span><span style="color:#a2d5b0">=</span><span style="color:#cfd2d8">"</span><span style="color:#8ea9d8">lg</span><span style="color:#cfd2d8">"</span></pre>
<pre style="position:absolute;left:45.24px;top:944.50px;font-size:17.74px;line-height:26.585px;color:#3e3e3e;-webkit-text-stroke:0;">66</pre>
<pre style="position:absolute;left:205.69px;top:971.08px;font-size:17.74px;line-height:26.585px;"><span style="color:#d9cdcd">muted</span></pre>
<pre style="position:absolute;left:45.24px;top:971.08px;font-size:17.74px;line-height:26.585px;color:#3e3e3e;-webkit-text-stroke:0;">67</pre>
<pre style="position:absolute;left:205.69px;top:997.67px;font-size:17.74px;line-height:26.585px;"><span style="opacity:.3"><span style="color:#d9cdcd">className</span><span style="color:#a2d5b0">=</span><span style="color:#cfd2d8">"</span><span style="color:#8ea9d8">text-center md:max-w-[800px] md:mx-auto</span><span style="color:#cfd2d8">"</span></span></pre>
<pre style="position:absolute;left:45.24px;top:997.67px;font-size:17.74px;line-height:26.585px;color:#3e3e3e;-webkit-text-stroke:0;">68</pre>
<div style="position:absolute;left:9.00px;top:0.00px;width:867.50px;height:26.40px;background:#212121;box-shadow:0 1.5px 3px rgba(0,0,0,.55);"></div>
<pre style="position:absolute;left:100.10px;top:0.21px;font-size:17.74px;line-height:26.585px;"><span style="color:#a2d5b0">const</span><span style="color:#ebebeb"> CallToAction </span><span style="color:#a2d5b0">=</span><span style="color:#ebebeb"> </span><span style="color:#f3c23f">(</span><span style="color:#d97a90">{</span></pre>
<pre style="position:absolute;left:45.24px;top:0.21px;font-size:17.74px;line-height:26.585px;color:#3e3e3e;-webkit-text-stroke:0;">27</pre>
<div style="position:absolute;left:99.00px;top:990.00px;width:659.00px;height:20.00px;background:rgba(255,255,255,.022);"></div>
<div style="position:absolute;left:876.50px;top:0.00px;width:87.50px;height:1010.00px;background:#212121;border-left:1px solid #1c1c1c;"></div>
<div style="position:absolute;left:964.00px;top:301.40px;width:17.00px;height:221.00px;background:rgba(44,44,44,.55);"></div>
<div style="position:absolute;left:964.50px;top:3.50px;width:15.50px;height:2.80px;background:#a3a3a3;"></div>
<div style="position:absolute;left:964.30px;top:68.60px;width:5.70px;height:7.60px;background:#d9c27f;"></div>
<div style="position:absolute;left:976.00px;top:68.60px;width:4.00px;height:7.60px;background:#8fd18f;"></div>
<div style="position:absolute;left:964.30px;top:87.00px;width:5.70px;height:18.00px;background:#d97a93;"></div>
<svg style="position:absolute;left:876.5px;top:0;width:87.5px;height:300px;" viewBox="0 0 87.5 300" fill="none" shape-rendering="auto"><rect x="1.0" y="22.90" width="86.5" height="2.6" fill="#6a6a6a" fill-opacity="0.75"/><rect x="4.1" y="22.90" width="52.6" height="2.6" fill="#93d08f" fill-opacity="1"/><rect x="3.3" y="32.10" width="84.2" height="1.7" fill="#9a6350" fill-opacity="0.9"/><rect x="1.0" y="120.10" width="86.5" height="2.6" fill="#6a6a6a" fill-opacity="0.75"/><rect x="4.1" y="120.10" width="17.2" height="2.6" fill="#93d08f" fill-opacity="1"/><path d="M4.1 0.90 H16.9" stroke="#6f93c4" stroke-opacity="0.48" stroke-width="1.25" stroke-dasharray="4.6 0.9 6.2 1.4"/><path d="M4.1 5.15 H28.3" stroke="#a0a0a0" stroke-opacity="0.48" stroke-width="1.25" stroke-dasharray="2.2 0.9 8 0.9 4.6 1.4 2.2 1.4 3.4 0.9"/><path d="M4.1 7.28 H44.6" stroke="#a0a0a0" stroke-opacity="0.48" stroke-width="1.25" stroke-dasharray="2.2 1.1 6.2 0.9 3.4 0.9 8 1.1 2.2 1.4 2.2 0.9 8 0.9 8 1.4"/><path d="M4.1 9.40 H50.1" stroke="#a0a0a0" stroke-opacity="0.48" stroke-width="1.25" stroke-dasharray="6.2 0.9 3.4 0.9 8 0.9 4.6 1.1 3.4 1.4 2.2 1.4 4.6 1.4 3.4 0.9 8 1.4"/><path d="M4.1 13.65 H64.8" stroke="#d0d0d0" stroke-opacity="0.48" stroke-width="1.25" stroke-dasharray="3.4 1.1 2.2 1.4 2.2 1.4 2.2 1.4 3.4 1.1 8 1.1 4.6 1.1 8 1.1 4.6 1.1 3.4 0.9 3.4 0.9 8 1.1"/><path d="M4.1 15.78 H24.0" stroke="#6f93c4" stroke-opacity="0.48" stroke-width="1.25" stroke-dasharray="8 1.1 4.6 1.4 6.2 1.1"/><path d="M4.1 17.90 H63.1" stroke="#d0d0d0" stroke-opacity="0.48" stroke-width="1.25" stroke-dasharray="8 0.9 2.2 1.4 6.2 0.9 4.6 0.9 6.2 1.1 2.2 1.4 2.2 1.4 8 1.1 4.6 1.4 4.6 1.4"/><path d="M4.1 20.03 H19.6" stroke="#6f93c4" stroke-opacity="0.48" stroke-width="1.25" stroke-dasharray="6.2 1.4 6.2 0.9 2.2 1.1"/><path d="M4.1 22.15 H54.4" stroke="#6a6a6a" stroke-opacity="0.48" stroke-width="1.25" stroke-dasharray="6.2 1.4 2.2 0.9 4.6 1.4 8 1.4 6.2 1.1 6.2 1.4 4.6 0.9 6.2 1.1"/><path d="M4.1 26.40 H52.3" stroke="#6a6a6a" stroke-opacity="0.48" stroke-width="1.25" stroke-dasharray="3.4 1.4 2.2 1.1 2.2 0.9 4.6 0.9 3.4 1.1 6.2 1.1 2.2 0.9 6.2 1.1 8 1.1 3.4 1.1"/><path d="M4.1 28.53 H68.6" stroke="#a0a0a0" stroke-opacity="0.48" stroke-width="1.25" stroke-dasharray="8 1.1 6.2 1.1 6.2 0.9 3.4 0.9 3.4 0.9 3.4 1.4 3.4 0.9 6.2 1.4 3.4 1.1 4.6 0.9 3.4 1.1 8 1.1"/><path d="M4.1 30.65 H61.0" stroke="#d0d0d0" stroke-opacity="0.48" stroke-width="1.25" stroke-dasharray="8 1.4 4.6 0.9 8 1.4 2.2 1.1 8 1.1 6.2 1.1 6.2 0.9 6.2 1.4"/><path d="M4.1 34.90 H7.1" stroke="#6a6a6a" stroke-opacity="0.48" stroke-width="1.25" stroke-dasharray="6.2 0.9"/><path d="M7.6 37.03 H31.6" stroke="#6a6a6a" stroke-opacity="0.48" stroke-width="1.25" stroke-dasharray="3.4 0.9 3.4 1.1 3.4 0.9 4.6 1.4 2.2 0.9 2.2 1.4"/><path d="M4.9 39.15 H7.1" stroke="#6a6a6a" stroke-opacity="0.48" stroke-width="1.25" stroke-dasharray="3.4 1.4"/><path d="M4.1 41.28 H39.2" stroke="#a0a0a0" stroke-opacity="0.48" stroke-width="1.25" stroke-dasharray="2.2 1.1 8 0.9 2.2 0.9 8 1.1 3.4 1.4 4.6 1.1 8 1.1"/><path d="M6.6 43.40 H49.5" stroke="#a0a0a0" stroke-opacity="0.48" stroke-width="1.25" stroke-dasharray="6.2 0.9 2.2 1.1 6.2 1.1 6.2 1.1 2.2 0.9 2.2 1.4 4.6 1.4 4.6 1.1"/><path d="M6.6 45.53 H19.6" stroke="#6f93c4" stroke-opacity="0.48" stroke-width="1.25" stroke-dasharray="3.4 1.4 2.2 0.9 8 1.1"/><path d="M6.6 47.65 H17.4" stroke="#6f93c4" stroke-opacity="0.48" stroke-width="1.25" stroke-dasharray="3.4 1.4 8 0.9"/><path d="M4.1 49.78 H6.0" stroke="#a0a0a0" stroke-opacity="0.48" stroke-width="1.25" stroke-dasharray="8 1.1"/><path d="M4.1 54.03 H7.1" stroke="#6a6a6a" stroke-opacity="0.48" stroke-width="1.25" stroke-dasharray="2.2 1.4"/><path d="M7.6 56.15 H44.1" stroke="#6a6a6a" stroke-opacity="0.48" stroke-width="1.25" stroke-dasharray="4.6 1.4 4.6 0.9 4.6 0.9 8 1.4 8 1.1 3.4 1.4"/><path d="M4.9 58.28 H7.1" stroke="#6a6a6a" stroke-opacity="0.48" stroke-width="1.25" stroke-dasharray="3.4 0.9"/><path d="M4.1 60.40 H28.3" stroke="#d0d0d0" stroke-opacity="0.48" stroke-width="1.25" stroke-dasharray="6.2 1.4 3.4 0.9 8 1.1 4.6 1.4"/><path d="M6.6 62.53 H11.5" stroke="#a0a0a0" stroke-opacity="0.48" stroke-width="1.25" stroke-dasharray="2.2 0.9 4.6 1.1"/><path d="M6.6 64.65 H13.6" stroke="#a0a0a0" stroke-opacity="0.48" stroke-width="1.25" stroke-dasharray="4.6 0.9 8 1.1"/><path d="M6.6 66.78 H8.2" stroke="#a0a0a0" stroke-opacity="0.48" stroke-width="1.25" stroke-dasharray="6.2 1.4"/><path d="M4.1 68.90 H45.7" stroke="#a0a0a0" stroke-opacity="0.48" stroke-width="1.25" stroke-dasharray="4.6 1.1 2.2 0.9 2.2 0.9 6.2 0.9 4.6 0.9 6.2 1.4 8 0.9 6.2 1.4"/><path d="M6.0 71.03 H51.2" stroke="#d0d0d0" stroke-opacity="0.48" stroke-width="1.25" stroke-dasharray="4.6 1.4 2.2 1.4 2.2 1.1 3.4 1.1 3.4 1.1 4.6 0.9 6.2 1.1 6.2 1.4 2.2 1.4"/><path d="M6.0 73.15 H47.9" stroke="#d0d0d0" stroke-opacity="0.48" stroke-width="1.25" stroke-dasharray="3.4 0.9 3.4 0.9 3.4 1.4 6.2 1.4 3.4 1.4 8 1.1 4.6 0.9 8 1.4"/><path d="M6.0 75.28 H58.8" stroke="#d0d0d0" stroke-opacity="0.48" stroke-width="1.25" stroke-dasharray="3.4 0.9 2.2 1.4 2.2 1.4 3.4 1.1 3.4 0.9 2.2 1.1 3.4 1.1 8 0.9 8 1.1 4.6 1.4 6.2 0.9"/><path d="M6.0 79.53 H24.0" stroke="#a0a0a0" stroke-opacity="0.48" stroke-width="1.25" stroke-dasharray="2.2 1.4 4.6 1.1 8 1.4"/><path d="M8.7 81.65 H40.3" stroke="#d0d0d0" stroke-opacity="0.48" stroke-width="1.25" stroke-dasharray="6.2 1.4 3.4 1.4 3.4 1.4 8 0.9 6.2 0.9"/><path d="M10.9 83.78 H46.8" stroke="#a0a0a0" stroke-opacity="0.48" stroke-width="1.25" stroke-dasharray="8 0.9 3.4 0.9 3.4 1.1 8 1.4 2.2 1.4 2.2 1.1 8 1.4"/><path d="M8.7 85.90 H9.8" stroke="#a0a0a0" stroke-opacity="0.48" stroke-width="1.25" stroke-dasharray="8 1.1"/><path d="M6.0 88.03 H13.1" stroke="#a0a0a0" stroke-opacity="0.48" stroke-width="1.25" stroke-dasharray="2.2 1.4 2.2 0.9 3.4 1.1"/><path d="M6.0 92.28 H14.2" stroke="#a0a0a0" stroke-opacity="0.48" stroke-width="1.25" stroke-dasharray="2.2 0.9 8 1.1"/><path d="M8.2 94.40 H76.2" stroke="#6f93c4" stroke-opacity="0.48" stroke-width="1.25" stroke-dasharray="8 0.9 2.2 1.1 4.6 1.4 8 1.4 8 0.9 4.6 1.1 8 1.4 6.2 1.4 3.4 1.4 8 1.1"/><path d="M8.2 96.53 H28.3" stroke="#6f93c4" stroke-opacity="0.48" stroke-width="1.25" stroke-dasharray="8 0.9 6.2 0.9 6.2 0.9"/><path d="M10.4 98.65 H26.1" stroke="#a0a0a0" stroke-opacity="0.48" stroke-width="1.25" stroke-dasharray="6.2 1.1 4.6 0.9 3.4 1.1"/><path d="M12.5 100.78 H47.4" stroke="#d0d0d0" stroke-opacity="0.48" stroke-width="1.25" stroke-dasharray="2.2 0.9 4.6 0.9 3.4 1.4 4.6 0.9 4.6 0.9 6.2 0.9 2.2 1.1 6.2 0.9"/><path d="M12.5 102.90 H28.3" stroke="#a0a0a0" stroke-opacity="0.48" stroke-width="1.25" stroke-dasharray="3.4 0.9 6.2 1.4 6.2 1.1"/><path d="M12.5 105.03 H28.3" stroke="#a0a0a0" stroke-opacity="0.48" stroke-width="1.25" stroke-dasharray="6.2 0.9 4.6 1.1 2.2 1.4"/><path d="M10.4 107.15 H12.5" stroke="#a0a0a0" stroke-opacity="0.48" stroke-width="1.25" stroke-dasharray="4.6 0.9"/><path d="M10.4 109.28 H21.8" stroke="#a0a0a0" stroke-opacity="0.48" stroke-width="1.25" stroke-dasharray="4.6 1.4 6.2 1.1"/><path d="M12.5 111.40 H45.7" stroke="#d0d0d0" stroke-opacity="0.48" stroke-width="1.25" stroke-dasharray="2.2 1.1 4.6 1.4 8 1.1 8 0.9 2.2 0.9 2.2 0.9"/><path d="M12.5 113.53 H77.8" stroke="#d0d0d0" stroke-opacity="0.48" stroke-width="1.25" stroke-dasharray="4.6 1.1 2.2 0.9 4.6 0.9 6.2 1.4 4.6 1.1 3.4 1.4 8 1.4 6.2 1.4 4.6 0.9 4.6 0.9 3.4 1.1 2.2 1.1"/><path d="M12.5 115.65 H77.3" stroke="#d0d0d0" stroke-opacity="0.48" stroke-width="1.25" stroke-dasharray="2.2 1.4 2.2 1.1 2.2 1.4 3.4 0.9 4.6 0.9 6.2 0.9 4.6 1.4 6.2 1.1 8 0.9 2.2 1.4 3.4 0.9 3.4 1.1 2.2 0.9"/><path d="M12.5 117.78 H53.9" stroke="#6f93c4" stroke-opacity="0.48" stroke-width="1.25" stroke-dasharray="3.4 1.1 4.6 1.4 3.4 1.1 6.2 1.4 3.4 1.1 4.6 0.9 4.6 0.9 2.2 0.9 8 1.4"/><path d="M10.4 119.90 H11.5" stroke="#a0a0a0" stroke-opacity="0.48" stroke-width="1.25" stroke-dasharray="3.4 1.4"/><path d="M15.3 124.15 H44.6" stroke="#d0d0d0" stroke-opacity="0.48" stroke-width="1.25" stroke-dasharray="6.2 0.9 6.2 0.9 6.2 1.4 6.2 1.4"/><rect x="4.3" y="124.80" width="83.1" height="2.4" fill="#93d08f" fill-opacity="1"/><rect x="4.3" y="126.98" width="62.8" height="2.4" fill="#93d08f" fill-opacity="1"/><rect x="4.3" y="129.16" width="54.9" height="2.4" fill="#93d08f" fill-opacity="1"/><rect x="4.3" y="131.34" width="19.4" height="2.4" fill="#93d08f" fill-opacity="1"/><rect x="4.3" y="133.52" width="63.9" height="2.4" fill="#93d08f" fill-opacity="1"/><rect x="4.3" y="135.70" width="66.1" height="2.4" fill="#93d08f" fill-opacity="1"/><rect x="1.2" y="20.80" width="1.4" height="4.799999999999983" fill="#d9b96a" fill-opacity="1"/><rect x="1.2" y="28.60" width="1.4" height="3.4000000000000057" fill="#d9b96a" fill-opacity="1"/><rect x="1.2" y="119.80" width="1.4" height="3.0" fill="#d9b96a" fill-opacity="1"/><rect x="1.2" y="124.80" width="1.4" height="13.099999999999966" fill="#d9b96a" fill-opacity="1"/><path d="M15.1 138.98 H17.4" stroke="#a0a0a0" stroke-opacity="0.48" stroke-width="1.25" stroke-dasharray="6.2 1.4"/><path d="M12.8 140.79 H15.1" stroke="#a0a0a0" stroke-opacity="0.48" stroke-width="1.25" stroke-dasharray="4.6 1.4"/><path d="M12.8 142.60 H17.4" stroke="#a0a0a0" stroke-opacity="0.48" stroke-width="1.25" stroke-dasharray="3.4 0.9 4.6 0.9"/><path d="M17.4 144.63 H49.0" stroke="#d0d0d0" stroke-opacity="0.48" stroke-width="1.25" stroke-dasharray="3.4 1.1 4.6 0.9 3.4 0.9 2.2 1.4 4.6 1.1 3.4 0.9 2.2 1.4 6.2 1.4"/><path d="M17.4 146.43 H23.0" stroke="#a0a0a0" stroke-opacity="0.48" stroke-width="1.25" stroke-dasharray="4.6 1.4"/><path d="M17.4 148.24 H20.7" stroke="#a0a0a0" stroke-opacity="0.48" stroke-width="1.25" stroke-dasharray="3.4 1.4"/><path d="M17.4 150.72 H62.5" stroke="#6f93c4" stroke-opacity="0.48" stroke-width="1.25" stroke-dasharray="4.6 0.9 6.2 0.9 3.4 1.1 6.2 0.9 4.6 1.1 4.6 1.4 4.6 0.9 2.2 1.1 3.4 1.1"/><path d="M12.8 152.53 H15.1" stroke="#a0a0a0" stroke-opacity="0.48" stroke-width="1.25" stroke-dasharray="3.4 0.9"/><path d="M10.6 154.33 H23.0" stroke="#a0a0a0" stroke-opacity="0.48" stroke-width="1.25" stroke-dasharray="4.6 1.1 2.2 1.1 4.6 1.4"/><path d="M12.8 156.37 H24.1" stroke="#a0a0a0" stroke-opacity="0.48" stroke-width="1.25" stroke-dasharray="3.4 0.9 8 0.9"/><path d="M15.1 158.17 H25.3" stroke="#a0a0a0" stroke-opacity="0.48" stroke-width="1.25" stroke-dasharray="2.2 1.1 2.2 0.9 6.2 1.4"/><path d="M17.4 160.88 H51.2" stroke="#d0d0d0" stroke-opacity="0.48" stroke-width="1.25" stroke-dasharray="2.2 1.1 2.2 1.1 4.6 1.4 3.4 0.9 8 1.4 3.4 1.4 8 1.1"/><path d="M17.4 162.69 H50.1" stroke="#d0d0d0" stroke-opacity="0.48" stroke-width="1.25" stroke-dasharray="4.6 1.4 6.2 0.9 4.6 1.4 8 1.4 3.4 0.9"/><path d="M12.8 164.49 H15.1" stroke="#a0a0a0" stroke-opacity="0.48" stroke-width="1.25" stroke-dasharray="8 1.4"/><path d="M12.8 167.20 H73.8" stroke="#d0d0d0" stroke-opacity="0.48" stroke-width="1.25" stroke-dasharray="6.2 1.4 8 0.9 8 1.4 8 0.9 8 1.4 3.4 0.9 2.2 0.9 3.4 1.4 4.6 0.9"/><path d="M12.8 169.01 H19.6" stroke="#a0a0a0" stroke-opacity="0.48" stroke-width="1.25" stroke-dasharray="6.2 1.1"/><path d="M12.8 170.59 H24.1" stroke="#6f93c4" stroke-opacity="0.48" stroke-width="1.25" stroke-dasharray="8 0.9 2.2 1.4"/><path d="M15.1 172.39 H58.0" stroke="#d0d0d0" stroke-opacity="0.48" stroke-width="1.25" stroke-dasharray="8 1.4 3.4 1.1 4.6 0.9 6.2 0.9 8 1.4 2.2 1.4 8 0.9"/><path d="M15.1 174.42 H70.4" stroke="#6f93c4" stroke-opacity="0.48" stroke-width="1.25" stroke-dasharray="6.2 1.1 2.2 1.1 3.4 1.4 3.4 0.9 6.2 1.1 6.2 0.9 6.2 1.4 4.6 0.9 8 1.4"/><path d="M17.4 177.36 H73.8" stroke="#6f93c4" stroke-opacity="0.48" stroke-width="1.25" stroke-dasharray="3.4 0.9 8 0.9 4.6 1.1 4.6 1.4 8 0.9 2.2 1.1 2.2 1.1 4.6 1.4 2.2 1.4 3.4 1.4 6.2 1.1"/><path d="M15.1 179.62 H37.7" stroke="#6f93c4" stroke-opacity="0.48" stroke-width="1.25" stroke-dasharray="8 1.1 6.2 1.1 6.2 0.9"/><path d="M11.7 181.87 H14.0" stroke="#a0a0a0" stroke-opacity="0.48" stroke-width="1.25" stroke-dasharray="8 0.9"/><path d="M12.8 186.39 H19.6" stroke="#a0a0a0" stroke-opacity="0.48" stroke-width="1.25" stroke-dasharray="4.6 0.9 6.2 0.9"/><path d="M15.1 188.65 H43.3" stroke="#d0d0d0" stroke-opacity="0.48" stroke-width="1.25" stroke-dasharray="4.6 1.1 2.2 1.4 6.2 1.1 6.2 0.9 3.4 0.9 8 0.9"/><path d="M17.4 190.90 H19.6" stroke="#a0a0a0" stroke-opacity="0.48" stroke-width="1.25" stroke-dasharray="3.4 1.4"/><path d="M17.4 192.71 H80.6" stroke="#6f93c4" stroke-opacity="0.48" stroke-width="1.25" stroke-dasharray="8 1.1 4.6 0.9 8 1.4 8 1.1 2.2 1.4 4.6 0.9 6.2 1.1 6.2 0.9 3.4 0.9 6.2 1.4"/><path d="M17.4 194.74 H28.6" stroke="#a0a0a0" stroke-opacity="0.48" stroke-width="1.25" stroke-dasharray="6.2 1.1 4.6 1.4"/><path d="M19.6 196.55 H53.5" stroke="#d0d0d0" stroke-opacity="0.48" stroke-width="1.25" stroke-dasharray="3.4 1.1 4.6 1.1 4.6 0.9 4.6 0.9 4.6 1.1 6.2 0.9"/><path d="M19.6 198.80 H51.2" stroke="#a0a0a0" stroke-opacity="0.48" stroke-width="1.25" stroke-dasharray="3.4 1.4 2.2 1.4 4.6 1.1 4.6 0.9 6.2 1.1 8 0.9"/><path d="M20.7 201.06 H60.2" stroke="#d0d0d0" stroke-opacity="0.48" stroke-width="1.25" stroke-dasharray="4.6 1.1 4.6 0.9 4.6 0.9 2.2 1.4 4.6 1.4 3.4 0.9 4.6 1.1 8 1.1"/><path d="M21.9 203.32 H62.5" stroke="#d0d0d0" stroke-opacity="0.48" stroke-width="1.25" stroke-dasharray="3.4 1.1 6.2 0.9 6.2 1.4 8 0.9 2.2 0.9 6.2 1.1 8 0.9"/><path d="M24.1 205.58 H58.0" stroke="#a0a0a0" stroke-opacity="0.48" stroke-width="1.25" stroke-dasharray="4.6 1.1 2.2 1.4 3.4 0.9 6.2 1.1 4.6 1.1 4.6 1.1 4.6 1.1"/><path d="M25.3 207.83 H61.4" stroke="#d0d0d0" stroke-opacity="0.48" stroke-width="1.25" stroke-dasharray="3.4 1.1 6.2 1.4 6.2 0.9 3.4 1.4 3.4 0.9 3.4 1.4 6.2 1.4"/><path d="M26.4 210.09 H71.5" stroke="#6f93c4" stroke-opacity="0.48" stroke-width="1.25" stroke-dasharray="3.4 1.1 4.6 1.1 6.2 0.9 8 0.9 3.4 0.9 3.4 1.1 8 0.9 4.6 0.9"/><path d="M24.1 212.35 H49.0" stroke="#d0d0d0" stroke-opacity="0.48" stroke-width="1.25" stroke-dasharray="4.6 1.1 8 0.9 2.2 1.4 6.2 1.1"/><path d="M17.4 215.73 H19.6" stroke="#a0a0a0" stroke-opacity="0.48" stroke-width="1.25" stroke-dasharray="6.2 1.4"/><path d="M15.1 217.99 H17.4" stroke="#a0a0a0" stroke-opacity="0.48" stroke-width="1.25" stroke-dasharray="8 0.9"/><path d="M15.1 222.51 H42.2" stroke="#d0d0d0" stroke-opacity="0.48" stroke-width="1.25" stroke-dasharray="6.2 1.1 4.6 0.9 6.2 1.1 8 1.1"/><path d="M12.8 224.76 H24.1" stroke="#a0a0a0" stroke-opacity="0.48" stroke-width="1.25" stroke-dasharray="3.4 1.4 8 1.4"/><path d="M10.6 227.02 H24.1" stroke="#a0a0a0" stroke-opacity="0.48" stroke-width="1.25" stroke-dasharray="3.4 0.9 4.6 0.9 6.2 1.1"/><path d="M12.8 228.83 H80.6" stroke="#d0d0d0" stroke-opacity="0.48" stroke-width="1.25" stroke-dasharray="6.2 1.1 4.6 0.9 3.4 0.9 6.2 1.4 6.2 1.4 6.2 0.9 2.2 1.1 8 1.1 6.2 0.9 2.2 0.9 3.4 0.9 8 1.4"/><path d="M10.6 231.08 H14.0" stroke="#a0a0a0" stroke-opacity="0.48" stroke-width="1.25" stroke-dasharray="2.2 1.4"/><path d="M8.3 233.34 H14.0" stroke="#a0a0a0" stroke-opacity="0.48" stroke-width="1.25" stroke-dasharray="6.2 0.9"/><path d="M6.1 236.05 H8.3" stroke="#a0a0a0" stroke-opacity="0.48" stroke-width="1.25" stroke-dasharray="8 0.9"/><path d="M4.3 237.86 H6.1" stroke="#a0a0a0" stroke-opacity="0.48" stroke-width="1.25" stroke-dasharray="2.2 0.9"/><path d="M4.3 241.24 H33.2" stroke="#d0d0d0" stroke-opacity="0.48" stroke-width="1.25" stroke-dasharray="3.4 1.4 2.2 1.4 4.6 0.9 4.6 1.4 6.2 1.4 2.2 0.9"/></svg>
</div>
<span class="t" style="left:887.6px;top:98.12px;font-size:16.4px;line-height:21px;color:#efd9a0;font-weight:700;letter-spacing:-0.525px;">x</span>
<span class="t" style="left:903.9px;top:99.04px;font-size:14.8px;line-height:19px;color:#a39268;-webkit-text-stroke:.3px currentColor;letter-spacing:0.404px;">.../BlogTextContent</span>
<span class="t" style="left:1043.9px;top:99.04px;font-size:14.8px;line-height:19px;color:#b7a575;font-weight:700;letter-spacing:0.072px;">M</span>
<svg style="left:1109.90px;top:99.30px;width:17px;height:17px;" viewBox="0 0 24 24" fill="none" stroke="#6888b0" stroke-width="1.35" stroke-linecap="round" stroke-linejoin="round"><ellipse cx="12" cy="12" rx="10" ry="4"/><ellipse cx="12" cy="12" rx="10" ry="4" transform="rotate(60 12 12)"/><ellipse cx="12" cy="12" rx="10" ry="4" transform="rotate(120 12 12)"/><circle cx="12" cy="12" r="1.3" fill="#6888b0" stroke="none"/></svg>
<span class="t" style="left:1134px;top:98.12px;font-size:16.4px;line-height:21px;color:#efd9a0;-webkit-text-stroke:.3px currentColor;letter-spacing:0.385px;">Heading.tsx</span>
<span class="t" style="left:1238.4px;top:99.04px;font-size:14.8px;line-height:19px;color:#b7a575;font-weight:700;letter-spacing:0.672px;">M</span>
<svg style="left:1304.90px;top:99.30px;width:17px;height:17px;" viewBox="0 0 24 24" fill="none" stroke="#6888b0" stroke-width="1.35" stroke-linecap="round" stroke-linejoin="round"><ellipse cx="12" cy="12" rx="10" ry="4"/><ellipse cx="12" cy="12" rx="10" ry="4" transform="rotate(60 12 12)"/><ellipse cx="12" cy="12" rx="10" ry="4" transform="rotate(120 12 12)"/><circle cx="12" cy="12" r="1.3" fill="#6888b0" stroke="none"/></svg>
<span class="t" style="left:1328.6px;top:98.12px;font-size:16.4px;line-height:21px;color:#efd9a0;-webkit-text-stroke:.3px currentColor;letter-spacing:0.435px;">index.tsx</span>
<span class="t" style="left:1404.4px;top:99.04px;font-size:14.8px;line-height:19px;color:#a39268;-webkit-text-stroke:.3px currentColor;letter-spacing:0.269px;">.../BigImage</span>
<span class="t" style="left:1492.7px;top:99.04px;font-size:14.8px;line-height:19px;color:#b7a575;font-weight:700;letter-spacing:0.972px;">M</span>
<div style="left:1542.4px;top:86.2px;width:275px;height:43.2px;background:#282828;"></div>
<svg style="left:1558.70px;top:99.30px;width:17px;height:17px;" viewBox="0 0 24 24" fill="none" stroke="#6888b0" stroke-width="1.35" stroke-linecap="round" stroke-linejoin="round"><ellipse cx="12" cy="12" rx="10" ry="4"/><ellipse cx="12" cy="12" rx="10" ry="4" transform="rotate(60 12 12)"/><ellipse cx="12" cy="12" rx="10" ry="4" transform="rotate(120 12 12)"/><circle cx="12" cy="12" r="1.3" fill="#6888b0" stroke="none"/></svg>
<span class="t" style="left:1583.2px;top:98.12px;font-size:16.4px;line-height:21px;color:#efd9a0;-webkit-text-stroke:.3px currentColor;letter-spacing:0.324px;">index.tsx</span>
<span class="t" style="left:1659px;top:99.04px;font-size:14.8px;line-height:19px;color:#a39268;-webkit-text-stroke:.3px currentColor;letter-spacing:0.307px;">.../CallToAction</span>
<span class="t" style="left:1769.5px;top:99.04px;font-size:14.8px;line-height:19px;color:#b7a575;font-weight:700;letter-spacing:0.672px;">M</span>
<svg style="left:1794.45px;top:102.05px;width:11.5px;height:11.5px;" viewBox="0 0 10 10" fill="none" stroke="#e4e4e4" stroke-width="1.3" stroke-linecap="round" stroke-linejoin="round"><path d="M1 1 L9 9 M9 1 L1 9"/></svg>
<div style="left:1831.3000000000002px;top:106.7px;width:2.2px;height:2.2px;border-radius:50%;background:#d0d0d0;"></div>
<div style="left:1835.9px;top:106.7px;width:2.2px;height:2.2px;border-radius:50%;background:#d0d0d0;"></div>
<div style="left:1840.5px;top:106.7px;width:2.2px;height:2.2px;border-radius:50%;background:#d0d0d0;"></div>
<div style="left:1195.7px;top:1067.8px;width:358.5px;height:41.8px;background:#242424;border:1px solid #333;border-radius:9px;box-shadow:0 2px 8px rgba(0,0,0,.35);"></div>
<svg style="left:1212.85px;top:1082.65px;width:11.5px;height:11.5px;" viewBox="0 0 10 10" fill="none" stroke="#d8d8d8" stroke-width="1.5" stroke-linecap="round" stroke-linejoin="round"><path d="M1.5 6.5 L5 3 L8.5 6.5"/></svg>
<span class="t" style="left:1236.5px;top:1079.17px;font-size:15.4px;line-height:20px;color:#ececec;-webkit-text-stroke:.4px currentColor;letter-spacing:0.469px;">4 / 4</span>
<svg style="left:1281.05px;top:1083.45px;width:11.5px;height:11.5px;" viewBox="0 0 10 10" fill="none" stroke="#d8d8d8" stroke-width="1.5" stroke-linecap="round" stroke-linejoin="round"><path d="M1.5 3.5 L5 7 L8.5 3.5"/></svg>
<div style="left:1325.4px;top:1075.8px;width:114.3px;height:25.6px;border:1px solid #3a3a3a;border-radius:5px;"></div>
<span class="t" style="left:1331px;top:1079.17px;font-size:15.4px;line-height:20px;color:#ececec;-webkit-text-stroke:.35px currentColor;letter-spacing:0.421px;">Undo All</span>
<span class="t" style="left:1396.6px;top:1081.41px;font-size:12.2px;line-height:16px;color:#8c8c8c;font-family:'DejaVu Sans',sans-serif;letter-spacing:-0.747px;">⇧⌘⌫</span>
<div style="left:1447px;top:1075.8px;width:99px;height:25.6px;background:#b3b3b3;border-radius:5px;"></div>
<span class="t" style="left:1453px;top:1079.16px;font-size:15.2px;line-height:20px;color:#2b2b2b;letter-spacing:0.158px;">Keep All</span>
<span class="t" style="left:1516px;top:1081.42px;font-size:12.4px;line-height:16px;color:#777;font-family:'DejaVu Sans',sans-serif;">⌘</span>
<svg style="left:1527.75px;top:1083.75px;width:12.5px;height:10.5px;" viewBox="0 0 12 11" fill="none" stroke="#777" stroke-width="1.3" stroke-linecap="round" stroke-linejoin="round"><path d="M10.5 1.5 V4.2 a2 2 0 0 1 -2 2 H2 M4.8 3.2 L1.8 6.2 L4.8 9.2"/></svg>
<div style="left:59px;top:1136px;width:1801.8px;height:26.4px;background:#262626;border-radius:0 0 11px 11px;"></div>
<div style="left:59px;top:1136px;width:44.4px;height:26.4px;background:#2c2c2c;border-radius:0 0 0 11px;"></div>
<svg style="left:72px;top:1138px;width:20px;height:22px;" viewBox="72 1138 20 22" fill="none" stroke="#9a9a9a" stroke-width="1.3" stroke-linecap="round" stroke-linejoin="round"><path d="M76.4 1146.4 L83 1150.9 L76.4 1155.5 M86.8 1141.6 L81.4 1146 L86.8 1150.5"/></svg>
<svg style="left:108px;top:1138px;width:24px;height:22px;" viewBox="108 1138 24 22" fill="none" stroke="#e4e4e4" stroke-width="1.35" stroke-linecap="round" stroke-linejoin="round"><circle cx="115.6" cy="1153.6" r="2.1"/><circle cx="124.3" cy="1144.1" r="2.1"/><path d="M114.9 1151.4 V1141.6 M124.3 1146.3 C124.3 1150.6 119.6 1150 117.4 1152.3"/></svg>
<span class="t" style="left:133.4px;top:1140.07px;font-size:15.4px;line-height:20px;color:#e4e4e4;text-shadow:0 0 .4px #e4e4e4;letter-spacing:0.088px;">main*</span>
<svg style="left:178px;top:1138px;width:26px;height:22px;" viewBox="178 1138 26 22" fill="none" stroke="#e4e4e4" stroke-width="1.35" stroke-linecap="round" stroke-linejoin="round"><path d="M184.6 1147.6 A6.3 6.3 0 0 1 196.3 1146.1 M196.7 1150.3 A6.3 6.3 0 0 1 185 1151.8"/><path d="M196.9 1142.6 L196.6 1146.4 L192.9 1145.6 M184.3 1155.3 L184.7 1151.5 L188.4 1152.3"/></svg>
<svg style="left:214px;top:1138px;width:24px;height:22px;" viewBox="214 1138 24 22" fill="none" stroke="#e4e4e4" stroke-width="1.3" stroke-linecap="round" stroke-linejoin="round"><circle cx="220.6" cy="1143.9" r="2.1"/><circle cx="220.6" cy="1154.3" r="2.1"/><circle cx="230.2" cy="1148.8" r="2.1"/><path d="M220.6 1146.1 V1152.1 M225 1141.4 V1157 M230.2 1151 C230.2 1153.8 226.6 1153.4 225.2 1155"/></svg>
<svg style="left:252px;top:1138px;width:24px;height:22px;" viewBox="252 1138 24 22" fill="none" stroke="#e4e4e4" stroke-width="1.3" stroke-linecap="round" stroke-linejoin="round"><path d="M271.3 1141.3 C266 1141 261.6 1143.8 259.4 1149.4 L263.2 1153.2 C268.8 1151 271.6 1146.6 271.3 1141.3 Z"/><circle cx="266.6" cy="1146" r="1.4"/><path d="M260 1148.4 L256.4 1148.6 L259 1145.4 L261.6 1145.2 M264.2 1152.6 L264 1156.2 L267.2 1153.6 L267.4 1151 M256.6 1152.6 V1156 H260"/></svg>
<svg style="left:272px;top:1138px;width:22px;height:22px;" viewBox="272 1138 22 22" fill="none" stroke="#e4e4e4" stroke-width="1.3" stroke-linecap="round" stroke-linejoin="round"><path d="M279.4 1147.6 L283.4 1151.6 L281.8 1153.2 a2.8 2.8 0 0 1 -4 0 a2.8 2.8 0 0 1 0 -4 Z M284.6 1150.4 L280.6 1146.4 L282.2 1144.8 a2.8 2.8 0 0 1 4 0 a2.8 2.8 0 0 1 0 4 Z M277.6 1153.4 L274.8 1156.2 M286.4 1144.6 L289 1142 M286.8 1141.4 l2.6 2.6"/></svg>
<span class="t" style="left:295px;top:1140.07px;font-size:15.4px;line-height:20px;color:#e4e4e4;text-shadow:0 0 .4px #e4e4e4;letter-spacing:0.281px;">Launchpad</span>
<svg style="left:395.30px;top:1141.80px;width:15px;height:15px;" viewBox="0 0 15 15" fill="none" stroke="#e4e4e4" stroke-width="1.15" stroke-linecap="round" stroke-linejoin="round"><circle cx="7.5" cy="7.5" r="6.5"/><path d="M4.9 4.9 L10.1 10.1 M10.1 4.9 L4.9 10.1"/></svg>
<span class="t" style="left:416.6px;top:1140.07px;font-size:15.4px;line-height:20px;color:#e4e4e4;text-shadow:0 0 .4px #e4e4e4;letter-spacing:-0.162px;">0</span>
<svg style="left:431.50px;top:1141.90px;width:15px;height:14px;" viewBox="0 0 15 14" fill="none" stroke="#e4e4e4" stroke-width="1.15" stroke-linecap="round" stroke-linejoin="round"><path d="M7.5 1.2 L14.2 12.8 H0.8 Z"/><path d="M7.5 5.4 V8.8 M7.5 10.6 V10.8"/></svg>
<span class="t" style="left:452.6px;top:1140.07px;font-size:15.4px;line-height:20px;color:#e4e4e4;text-shadow:0 0 .4px #e4e4e4;letter-spacing:-0.162px;">0</span>
<svg style="left:1002.50px;top:1145.30px;width:17px;height:8px;" viewBox="0 0 17 8" fill="none" stroke="#e4e4e4" stroke-width="1.2" stroke-linecap="round" stroke-linejoin="round"><circle cx="8.5" cy="4" r="2.8"/><path d="M0.8 4 H5.7 M11.3 4 H16.2"/></svg>
<span class="t" style="left:1024.7px;top:1140.07px;font-size:15.4px;line-height:20px;color:#e4e4e4;text-shadow:0 0 .4px #e4e4e4;letter-spacing:0.353px;">You, 17 months ago</span>
<span class="t" style="left:1188px;top:1140.07px;font-size:15.4px;line-height:20px;color:#e4e4e4;text-shadow:0 0 .4px #e4e4e4;letter-spacing:0.280px;">Cursor Tab</span>
<span class="t" style="left:1286px;top:1140.07px;font-size:15.4px;line-height:20px;color:#e4e4e4;text-shadow:0 0 .4px #e4e4e4;letter-spacing:0.178px;">Ln 1, Col 1</span>
<span class="t" style="left:1384px;top:1140.07px;font-size:15.4px;line-height:20px;color:#e4e4e4;text-shadow:0 0 .4px #e4e4e4;letter-spacing:0.227px;">Spaces: 2</span>
<span class="t" style="left:1475.5px;top:1140.07px;font-size:15.4px;line-height:20px;color:#e4e4e4;text-shadow:0 0 .4px #e4e4e4;letter-spacing:0.478px;">UTF-8</span>
<span class="t" style="left:1541.8px;top:1140.07px;font-size:15.4px;line-height:20px;color:#e4e4e4;text-shadow:0 0 .4px #e4e4e4;letter-spacing:-0.384px;">LF</span>
<span class="t" style="left:1603px;top:1140.07px;font-size:15.4px;line-height:20px;color:#e4e4e4;text-shadow:0 0 .4px #e4e4e4;letter-spacing:0.227px;">TypeScript JSX</span>
<span class="t" style="left:1751.5px;top:1140.07px;font-size:15.4px;line-height:20px;color:#e4e4e4;text-shadow:0 0 .4px #e4e4e4;letter-spacing:0.436px;">Prettier</span>
<span class="t" style="left:1578.5px;top:1139.47px;font-size:15.4px;line-height:20px;color:#e4e4e4;letter-spacing:2.659px;">{}</span>
<svg style="left:1728.70px;top:1143.80px;width:18px;height:11px;" viewBox="0 0 18 11" fill="none" stroke="#e4e4e4" stroke-width="1.1" stroke-linecap="round" stroke-linejoin="round"><path d="M0.8 6.4 L3.6 9.6 L4.8 8.2 M5 6.2 L8 9.8 L17 1"/><path d="M6.8 7.6 L12.6 1.2"/></svg>
<svg style="left:1826.60px;top:1141.30px;width:14px;height:16px;" viewBox="0 0 14 16" fill="none" stroke="#e4e4e4" stroke-width="1.2" stroke-linecap="round" stroke-linejoin="round"><path d="M2 11.6 C3.2 10.4 3.2 9 3.2 6.6 a3.8 3.8 0 0 1 7.6 0 C10.8 9 10.8 10.4 12 11.6 Z M5.6 13.8 a1.5 1.5 0 0 0 2.8 0"/></svg>
</body></html>
